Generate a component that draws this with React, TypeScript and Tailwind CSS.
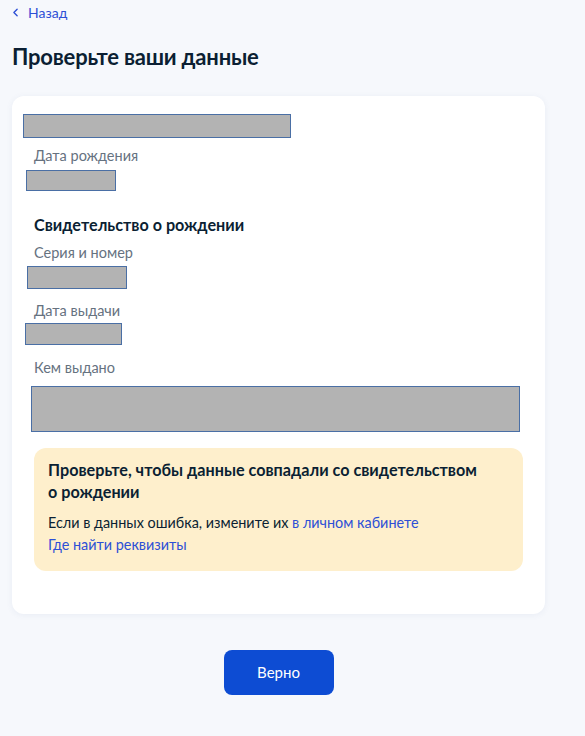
import { ChevronLeft } from 'lucide-react';

// блок-заглушка вместо скрытых персональных данных
function Redacted({ className }: { className: string }) {
  return <div className={`bg-[#b3b3b3] border border-[#4a6fa5] ${className}`} />;
}

export default function App() {
  return (
    <div className="min-h-screen w-[585px] bg-[#f6f8fc] font-['Lato','Noto_Sans',sans-serif] text-[#0b1f33]">
      {/* назад */}
      <div className="flex items-center gap-[6px] pl-[9px] pt-[3px] h-[22px] text-[14px] text-[#2d4fd6]">
        <ChevronLeft className="w-[13px] h-[13px]" strokeWidth={2.5} />
        <span>Назад</span>
      </div>

      <h1 className="ml-[12px] mt-[20px] text-[22px] leading-[30px] font-bold tracking-[-0.2px]">Проверьте ваши данные</h1>

      {/* карточка */}
      <div className="mx-[12px] mt-[24px] w-[533px] bg-white rounded-[12px] shadow-[0_1px_6px_rgba(80,100,150,0.08)] pt-[18px] pb-[43px]">
        <Redacted className="ml-[11px] w-[268px] h-[24px]" />
        <div className="ml-[22px] mt-[8px] text-[14.5px] leading-[20px] text-[#66727f]">Дата рождения</div>
        <Redacted className="ml-[14px] mt-[4px] w-[90px] h-[21px]" />

        <div className="ml-[22px] mt-[22px] text-[16.2px] leading-[24px] font-bold">Свидетельство о рождении</div>
        <div className="ml-[22px] mt-[6px] text-[14.5px] leading-[20px] text-[#66727f]">Серия и номер</div>
        <Redacted className="ml-[15px] mt-[3px] w-[100px] h-[23px]" />

        <div className="ml-[22px] mt-[12px] text-[14.5px] leading-[20px] text-[#66727f]">Дата выдачи</div>
        <Redacted className="ml-[13px] mt-[2px] w-[97px] h-[22px]" />

        <div className="ml-[22px] mt-[13px] text-[14.5px] leading-[20px] text-[#66727f]">Кем выдано</div>
        <Redacted className="ml-[19px] mt-[8px] w-[489px] h-[46px]" />

        {/* предупреждение */}
        <div className="ml-[22px] mt-[16px] w-[489px] h-[123px] bg-[#feefcc] rounded-[12px] pl-[14px] pt-[11px]">
          <div className="text-[16.2px] leading-[22px] font-bold">
            Проверьте, чтобы данные совпадали со свидетельством
            <br />
            о рождении
          </div>
          <div className="mt-[9px] text-[14.4px] leading-[22px]">
            Если в данных ошибка, измените их <span className="text-[#2d4fd6]">в личном кабинете</span>
          </div>
          <div className="text-[14.4px] leading-[22px] text-[#2d4fd6]">Где найти реквизиты</div>
        </div>
      </div>

      <div className="flex justify-center w-[557px] mt-[36px] pb-[41px]">
        <button className="w-[110px] h-[45px] rounded-[8px] bg-[#0d4cd3] text-white text-[15px]">Верно</button>
      </div>
    </div>
  );
}
